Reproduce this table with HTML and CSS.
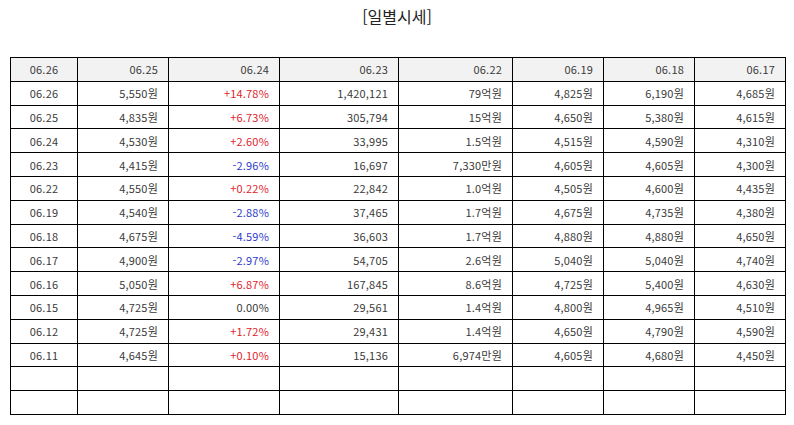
FILE: index.html
```html
<!DOCTYPE html>
<html lang="ko">
<head>
<meta charset="utf-8">
<title>일별시세</title>
<link rel="stylesheet" href="styles.css">
</head>
<body>
<div class="page">
  <h1 class="title">[일별시세]</h1>
  <table class="quotes">
    <colgroup>
      <col class="c1"><col class="c2"><col class="c3"><col class="c4"><col class="c5"><col class="c6"><col class="c7"><col class="c8">
    </colgroup>
    <thead>
      <tr><th class="date">06.26</th><th>06.25</th><th>06.24</th><th>06.23</th><th>06.22</th><th>06.19</th><th>06.18</th><th>06.17</th></tr>
    </thead>
    <tbody>
      <tr><td class="date">06.26</td><td>5,550원</td><td class="up">+14.78%</td><td>1,420,121</td><td>79억원</td><td>4,825원</td><td>6,190원</td><td>4,685원</td></tr>
      <tr><td class="date">06.25</td><td>4,835원</td><td class="up">+6.73%</td><td>305,794</td><td>15억원</td><td>4,650원</td><td>5,380원</td><td>4,615원</td></tr>
      <tr><td class="date">06.24</td><td>4,530원</td><td class="up">+2.60%</td><td>33,995</td><td>1.5억원</td><td>4,515원</td><td>4,590원</td><td>4,310원</td></tr>
      <tr><td class="date">06.23</td><td>4,415원</td><td class="down">-2.96%</td><td>16,697</td><td>7,330만원</td><td>4,605원</td><td>4,605원</td><td>4,300원</td></tr>
      <tr><td class="date">06.22</td><td>4,550원</td><td class="up">+0.22%</td><td>22,842</td><td>1.0억원</td><td>4,505원</td><td>4,600원</td><td>4,435원</td></tr>
      <tr><td class="date">06.19</td><td>4,540원</td><td class="down">-2.88%</td><td>37,465</td><td>1.7억원</td><td>4,675원</td><td>4,735원</td><td>4,380원</td></tr>
      <tr><td class="date">06.18</td><td>4,675원</td><td class="down">-4.59%</td><td>36,603</td><td>1.7억원</td><td>4,880원</td><td>4,880원</td><td>4,650원</td></tr>
      <tr><td class="date">06.17</td><td>4,900원</td><td class="down">-2.97%</td><td>54,705</td><td>2.6억원</td><td>5,040원</td><td>5,040원</td><td>4,740원</td></tr>
      <tr><td class="date">06.16</td><td>5,050원</td><td class="up">+6.87%</td><td>167,845</td><td>8.6억원</td><td>4,725원</td><td>5,400원</td><td>4,630원</td></tr>
      <tr><td class="date">06.15</td><td>4,725원</td><td>0.00%</td><td>29,561</td><td>1.4억원</td><td>4,800원</td><td>4,965원</td><td>4,510원</td></tr>
      <tr><td class="date">06.12</td><td>4,725원</td><td class="up">+1.72%</td><td>29,431</td><td>1.4억원</td><td>4,650원</td><td>4,790원</td><td>4,590원</td></tr>
      <tr><td class="date">06.11</td><td>4,645원</td><td class="up">+0.10%</td><td>15,136</td><td>6,974만원</td><td>4,605원</td><td>4,680원</td><td>4,450원</td></tr>
      <tr><td></td><td></td><td></td><td></td><td></td><td></td><td></td><td></td></tr>
      <tr><td></td><td></td><td></td><td></td><td></td><td></td><td></td><td></td></tr>
    </tbody>
  </table>
</div>
</body>
</html>
```

FILE: styles.css
```css
html, body {
  margin: 0;
  padding: 0;
  background: #fff;
}
body {
  font-family: "Noto Sans CJK KR", "Noto Sans", sans-serif;
  color: #333;
}
.page {
  width: 794px;
}
.title {
  margin: 0;
  height: 57px;
  box-sizing: border-box;
  padding-top: 5px;
  text-align: center;
  font-size: 16px;
  line-height: 22px;
  font-weight: normal;
  color: #222;
}
.quotes {
  margin-left: 10px;
  width: 775px;
  table-layout: fixed;
  border-collapse: collapse;
  font-size: 11px;
}
.c1 { width: 67px; }
.c2 { width: 91px; }
.c3 { width: 111px; }
.c4 { width: 119px; }
.c5 { width: 114px; }
.c6 { width: 91px; }
.c7 { width: 91px; }
.c8 { width: 91px; }
.quotes th,
.quotes td {
  border: 1px solid #000;
  height: 22.8px;
  padding: 0 10px 0 4px;
  text-align: right;
  font-weight: normal;
  white-space: nowrap;
  line-height: 14px;
  color: #3a3a3a;
  letter-spacing: 0.2px;
}
.quotes th {
  background: #f2f2f2;
}
.quotes .date {
  text-align: center;
  padding: 0;
}
.quotes .up {
  color: #e0242c;
}
.quotes .down {
  color: #2e3bcc;
}
```
